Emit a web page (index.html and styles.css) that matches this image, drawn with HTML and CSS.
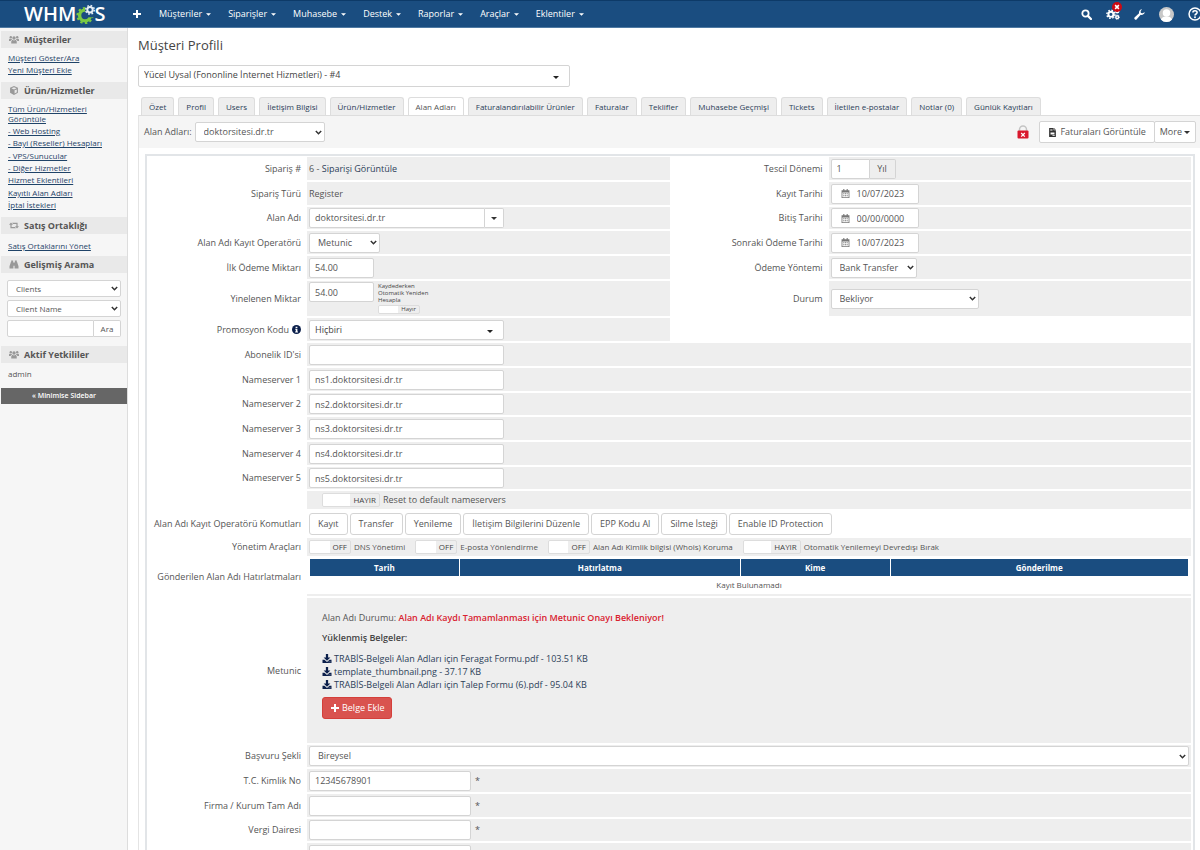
FILE: index.html
```html
<!DOCTYPE html>
<html lang="tr">
<head>
<meta charset="utf-8">
<title>WHMCS - Müşteri Profili</title>
<link rel="stylesheet" href="styles.css">
</head>
<body>
<svg class="defs" aria-hidden="true">
  <symbol id="caret" viewBox="0 0 8 4"><path d="M0 0h8L4 4z"/></symbol>
  <symbol id="plus" viewBox="0 0 10 10"><path d="M4 1h2v3h3v2H6v3H4V6H1V4h3z"/></symbol>
  <symbol id="users" viewBox="0 0 20 16"><circle cx="10" cy="5" r="3.4"/><circle cx="3.6" cy="3.6" r="2.4"/><circle cx="16.4" cy="3.6" r="2.4"/><path d="M4.500 16v-3.500c0-2.500 1.500-3.500 3-3.500 1.500 1 3.500 1 5 0 1.500 0 3 1 3 3.500V16zM0 11V8.500C0 7 1 6.500 2 6.500c1 .7 2.500.7 3.500 0L6.500 8C4.500 8.500 3.600 9.500 3.400 11zM20 11V8.500c0-1.500-1-2-2-2-1 .7-2.500.7-3.500 0L13.500 8c2 .5 2.900 1.500 3.100 3z"/></symbol>
  <symbol id="cube" viewBox="0 0 16 16"><path fill-rule="evenodd" d="M8 0l7 3v9l-7 4-7-4V3zM8 2L3.500 4 8 6l4.500-2zM9 13.500l4-2.300V6L9 7.700z"/></symbol>
  <symbol id="retweet" viewBox="0 0 20 14"><path d="M4 1l4 4.500H5.200V10H12l2 2.500H2.800v-7H0zM16 13l-4-4.500h2.800V4H8L6 1.500h11.200v7H20z"/></symbol>
  <symbol id="binoculars" viewBox="0 0 16 16"><path d="M3 1h3.500v2.500H7V15H0v-4L2.500 3.500H3zM9.500 1H13v2.500h.5L16 11v4H9V3.500h.5zM7 5h2v5H7z"/></symbol>
  <symbol id="calendar" viewBox="0 0 16 16"><path fill-rule="evenodd" d="M4 0h2v2h4V0h2v2h3v14H1V2h3zM2.500 6v8.500h11V6zM4 7.500h2v2H4zm3 0h2v2H7zm3 0h2v2h-2zM4 11h2v2H4zm3 0h2v2H7zm3 0h2v2h-2z"/></symbol>
  <symbol id="download" viewBox="0 0 16 16"><path fill-rule="evenodd" d="M6 0h4v6h4l-6 6-6-6h4zM0 10h3.500L8 14l4.500-4H16v6H0zm11 3.500v1h1v-1zm2 0v1h1v-1z"/></symbol>
  <symbol id="invoice" viewBox="0 0 12 16"><path fill-rule="evenodd" d="M0 0h8v4h4v12H0zM9 0l3 3H9zM2 2v1h4V2zm0 2.500v1h4v-1zM2.500 8v3.500h7V8zM6 13v1h4v-1z"/></symbol>
</svg>

<header class="navbar">
  <a class="logo" href="#" aria-label="WHMCS">
    <span>WHM</span>
    <svg class="gear" viewBox="0 0 20 20" aria-hidden="true">
      <circle cx="9" cy="11.500" r="5.400" fill="none" stroke="#7ac943" stroke-width="3.400"/>
      <circle cx="9" cy="11.500" r="7.600" fill="none" stroke="#7ac943" stroke-width="2" stroke-dasharray="2.400 2.375"/>
      <path d="M12 9.500h8v3.800h-8z" fill="#1a4d80"/>
      <circle cx="14" cy="5.800" r="5" fill="#1a4d80"/>
      <circle cx="14" cy="5.800" r="2.700" fill="none" stroke="#e6eef5" stroke-width="2"/>
      <circle cx="14" cy="5.800" r="4.300" fill="none" stroke="#e6eef5" stroke-width="1.500" stroke-dasharray="1.700 1.677"/>
    </svg>
    <span>S</span>
  </a>
  <nav class="menu">
    <a class="add" href="#" aria-label="Ekle"><svg><use href="#plus"/></svg></a>
    <a href="#">Müşteriler<svg class="caret"><use href="#caret"/></svg></a>
    <a href="#">Siparişler<svg class="caret"><use href="#caret"/></svg></a>
    <a href="#">Muhasebe<svg class="caret"><use href="#caret"/></svg></a>
    <a href="#">Destek<svg class="caret"><use href="#caret"/></svg></a>
    <a href="#">Raporlar<svg class="caret"><use href="#caret"/></svg></a>
    <a href="#">Araçlar<svg class="caret"><use href="#caret"/></svg></a>
    <a href="#">Eklentiler<svg class="caret"><use href="#caret"/></svg></a>
  </nav>
  <div class="tools">
    <a href="#" aria-label="Ara"><svg viewBox="0 0 16 16"><circle cx="6.500" cy="6.500" r="4.600" fill="none" stroke="#fff" stroke-width="2.600"/><path d="M10 10l4.500 4.500" stroke="#fff" stroke-width="3.200" stroke-linecap="round"/></svg></a>
    <a class="gears" href="#" aria-label="Otomasyon"><svg viewBox="0 0 20 16"><circle cx="7" cy="8.500" r="3.600" fill="none" stroke="#fff" stroke-width="2.800"/><circle cx="7" cy="8.500" r="5.700" fill="none" stroke="#fff" stroke-width="2.200" stroke-dasharray="2.300 2.180"/><circle cx="16" cy="12.500" r="2" fill="none" stroke="#fff" stroke-width="2"/><circle cx="16" cy="12.500" r="3.200" fill="none" stroke="#fff" stroke-width="1.200" stroke-dasharray="1.300 1.200"/><circle cx="16" cy="4" r="2.200" fill="none" stroke="#fff" stroke-width="2"/></svg><span class="badge"><svg viewBox="0 0 8 8"><path d="M1.500 1.500l5 5M6.500 1.500l-5 5" stroke="#fff" stroke-width="2"/></svg></span></a>
    <a href="#" aria-label="Ayarlar"><svg viewBox="0 0 16 16"><path fill="#fff" d="M15.500 4.200A4.600 4.600 0 0 1 9.700 8.500L4 14.800a2 2 0 0 1-2.900-2.900L7.400 6.200A4.600 4.600 0 0 1 11.800.5L9.600 3l.4 2.700 2.800.5z"/></svg></a>
    <a class="avatar" href="#" aria-label="Hesap"><svg viewBox="0 0 16 16"><circle cx="8" cy="8" r="8" fill="#c8c8c8"/><circle cx="8" cy="6.500" r="4" fill="#fff"/><path d="M2 13.200c1.200-2.500 3.500-3.200 6-3.200s4.800.7 6 3.200A8 8 0 0 1 2 13.200z" fill="#fff"/></svg></a>
    <a href="#" aria-label="Yardım"><svg class="help" viewBox="0 0 16 16"><circle cx="8" cy="8" r="6.800" fill="none" stroke="#fff" stroke-width="1.700"/><path d="M5.600 6.200C5.700 3.500 10.400 3.600 10.400 6.300 10.400 8 8 8 8 9.700" fill="none" stroke="#fff" stroke-width="1.800"/><circle cx="8" cy="11.800" r="1.100" fill="#fff"/></svg></a>
  </div>
</header>

<div class="layout">
  <aside class="sidebar">
    <h2><svg><use href="#users"/></svg>Müşteriler</h2>
    <ul>
      <li><a href="#">Müşteri Göster/Ara</a></li>
      <li><a href="#">Yeni Müşteri Ekle</a></li>
    </ul>
    <h2><svg><use href="#cube"/></svg>Ürün/Hizmetler</h2>
    <ul>
      <li><a href="#">Tüm Ürün/Hizmetleri Görüntüle</a></li>
      <li><a href="#">- Web Hosting</a></li>
      <li><a href="#">- Bayi (Reseller) Hesapları</a></li>
      <li><a href="#">- VPS/Sunucular</a></li>
      <li><a href="#">- Diğer Hizmetler</a></li>
      <li><a href="#">Hizmet Eklentileri</a></li>
      <li><a href="#">Kayıtlı Alan Adları</a></li>
      <li><a href="#">İptal İstekleri</a></li>
    </ul>
    <h2><svg><use href="#retweet"/></svg>Satış Ortaklığı</h2>
    <ul class="single">
      <li><a href="#">Satış Ortaklarını Yönet</a></li>
    </ul>
    <h2><svg><use href="#binoculars"/></svg>Gelişmiş Arama</h2>
    <form class="search">
      <select aria-label="Arama türü"><option>Clients</option></select>
      <select aria-label="Arama alanı"><option>Client Name</option></select>
      <div class="group"><input type="text" aria-label="Aranan"><button type="button">Ara</button></div>
    </form>
    <h2><svg><use href="#users"/></svg>Aktif Yetkililer</h2>
    <p class="staff">admin</p>
    <button class="minimise" type="button">« Minimise Sidebar</button>
  </aside>

  <main class="content">
    <h1>Müşteri Profili</h1>
    <div class="picker client"><select aria-label="Müşteri"><option>Yücel Uysal (Fononline İnternet Hizmetleri) - #4</option></select><svg class="caret"><use href="#caret"/></svg></div>

    <nav class="tabs">
      <a href="#">Özet</a><a href="#">Profil</a><a href="#">Users</a><a href="#">İletişim Bilgisi</a><a href="#">Ürün/Hizmetler</a><a class="active" href="#">Alan Adları</a><a href="#">Faturalandırılabilir Ürünler</a><a href="#">Faturalar</a><a href="#">Teklifler</a><a href="#">Muhasebe Geçmişi</a><a href="#">Tickets</a><a href="#">İletilen e-postalar</a><a href="#">Notlar (0)</a><a href="#">Günlük Kayıtları</a>
    </nav>

    <div class="pane">
      <div class="toolbar">
        <label for="domains">Alan Adları:</label>
        <select id="domains" class="w130"><option>doktorsitesi.dr.tr</option></select>
        <svg class="lock" viewBox="0 0 12 14" role="img" aria-label="Kilit"><path d="M2.500 6V4.500a3.500 3.500 0 0 1 7 0V6" fill="none" stroke="#c4c4c4" stroke-width="1.500"/><rect x=".5" y="5.500" width="11" height="8" rx="1" fill="#d9182d"/><path d="M4.200 8l3.600 3.600M7.800 8l-3.600 3.600" stroke="#fff" stroke-width="1.300"/></svg>
        <div class="actions"><button type="button"><svg class="inv"><use href="#invoice"/></svg>Faturaları Görüntüle</button><button type="button" class="more">More<svg class="caret"><use href="#caret"/></svg></button></div>
      </div>

      <form class="panel">
        <div class="columns">
          <div class="col">
            <div class="row"><span class="label">Sipariş #</span><div class="field"><span>6 - <a href="#">Siparişi Görüntüle</a></span></div></div>
            <div class="row"><span class="label">Sipariş Türü</span><div class="field">Register</div></div>
            <div class="row"><label class="label" for="dom">Alan Adı</label><div class="field"><div class="group w195"><input id="dom" type="text" value="doktorsitesi.dr.tr"><button type="button" class="drop" aria-label="Seçenekler"><svg class="caret"><use href="#caret"/></svg></button></div></div></div>
            <div class="row"><label class="label" for="reg">Alan Adı Kayıt Operatörü</label><div class="field"><select id="reg" class="w71"><option>Metunic</option></select></div></div>
            <div class="row"><label class="label" for="first">İlk Ödeme Miktarı</label><div class="field"><input id="first" class="w65" type="text" value="54.00"></div></div>
            <div class="row tall"><label class="label" for="rec">Yinelenen Miktar</label><div class="field"><input id="rec" class="w65" type="text" value="54.00"><label class="recalc">Kaydederken<br>Otomatik Yeniden<br>Hesapla<span class="switch tiny"><input type="checkbox"><span>Hayır</span></span></label></div></div>
            <div class="row"><label class="label" for="promo">Promosyon Kodu <svg class="info" viewBox="0 0 10 10"><circle cx="5" cy="5" r="5" fill="#0b1f4b"/><path d="M4 2h2v1.400H4zM3.600 4.200H6v3h.6v1H3.500v-1h.7v-2h-.6z" fill="#fff"/></svg></label><div class="field"><div class="picker w195"><select id="promo"><option>Hiçbiri</option></select><svg class="caret"><use href="#caret"/></svg></div></div></div>
          </div>
          <div class="col">
            <div class="row"><label class="label" for="period">Tescil Dönemi</label><div class="field"><div class="group w65"><input id="period" type="text" value="1"><span class="addon">Yıl</span></div></div></div>
            <div class="row"><label class="label" for="d1">Kayıt Tarihi</label><div class="field"><div class="date"><svg><use href="#calendar"/></svg><input id="d1" type="text" value="10/07/2023"></div></div></div>
            <div class="row"><label class="label" for="d2">Bitiş Tarihi</label><div class="field"><div class="date"><svg><use href="#calendar"/></svg><input id="d2" type="text" value="00/00/0000"></div></div></div>
            <div class="row"><label class="label" for="d3">Sonraki Ödeme Tarihi</label><div class="field"><div class="date"><svg><use href="#calendar"/></svg><input id="d3" type="text" value="10/07/2023"></div></div></div>
            <div class="row"><label class="label" for="pay">Ödeme Yöntemi</label><div class="field"><select id="pay" class="w86"><option>Bank Transfer</option></select></div></div>
            <div class="row tall"><label class="label" for="status">Durum</label><div class="field"><select id="status" class="w148"><option>Bekliyor</option></select></div></div>
          </div>
        </div>

        <div class="rows">
          <div class="row"><label class="label" for="sub">Abonelik ID'si</label><div class="field"><input id="sub" class="w195" type="text"></div></div>
          <div class="row"><label class="label" for="ns1">Nameserver 1</label><div class="field"><input id="ns1" class="w195" type="text" value="ns1.doktorsitesi.dr.tr"></div></div>
          <div class="row"><label class="label" for="ns2">Nameserver 2</label><div class="field"><input id="ns2" class="w195" type="text" value="ns2.doktorsitesi.dr.tr"></div></div>
          <div class="row"><label class="label" for="ns3">Nameserver 3</label><div class="field"><input id="ns3" class="w195" type="text" value="ns3.doktorsitesi.dr.tr"></div></div>
          <div class="row"><label class="label" for="ns4">Nameserver 4</label><div class="field"><input id="ns4" class="w195" type="text" value="ns4.doktorsitesi.dr.tr"></div></div>
          <div class="row"><label class="label" for="ns5">Nameserver 5</label><div class="field"><input id="ns5" class="w195" type="text" value="ns5.doktorsitesi.dr.tr"></div></div>
          <div class="row short indent"><span class="label"></span><div class="field"><label class="toggle"><span class="switch wide"><input type="checkbox"><span>HAYIR</span></span>Reset to default nameservers</label></div></div>
          <div class="row commands"><span class="label">Alan Adı Kayıt Operatörü Komutları</span><div class="field"><button type="button">Kayıt</button><button type="button">Transfer</button><button type="button">Yenileme</button><button type="button">İletişim Bilgilerini Düzenle</button><button type="button">EPP Kodu Al</button><button type="button">Silme İsteği</button><button type="button">Enable ID Protection</button></div></div>
          <div class="row short management"><span class="label">Yönetim Araçları</span><div class="field">
            <label class="toggle"><span class="switch"><input type="checkbox"><span>OFF</span></span>DNS Yönetimi</label>
            <label class="toggle"><span class="switch"><input type="checkbox"><span>OFF</span></span>E-posta Yönlendirme</label>
            <label class="toggle"><span class="switch"><input type="checkbox"><span>OFF</span></span>Alan Adı Kimlik bilgisi (Whois) Koruma</label>
            <label class="toggle"><span class="switch wide"><input type="checkbox"><span>HAYIR</span></span>Otomatik Yenilemeyi Devredışı Bırak</label>
          </div></div>
          <div class="row reminders"><span class="label">Gönderilen Alan Adı Hatırlatmaları</span><div class="field">
            <table>
              <thead><tr><th class="c1">Tarih</th><th class="c2">Hatırlatma</th><th class="c3">Kime</th><th>Gönderilme</th></tr></thead>
              <tbody><tr><td colspan="4">Kayıt Bulunamadı</td></tr></tbody>
            </table>
          </div></div>
          <div class="row module"><span class="label">Metunic</span><div class="field">
            <p>Alan Adı Durumu: <strong class="alert">Alan Adı Kaydı Tamamlanması için Metunic Onayı Bekleniyor!</strong></p>
            <p><strong>Yüklenmiş Belgeler:</strong></p>
            <ul>
              <li><a href="#"><svg><use href="#download"/></svg>TRABİS-Belgeli Alan Adları için Feragat Formu.pdf - 103.51 KB</a></li>
              <li><a href="#"><svg><use href="#download"/></svg>template_thumbnail.png - 37.17 KB</a></li>
              <li><a href="#"><svg><use href="#download"/></svg>TRABİS-Belgeli Alan Adları için Talep Formu (6).pdf - 95.04 KB</a></li>
            </ul>
            <button class="danger" type="button"><svg><use href="#plus"/></svg>Belge Ekle</button>
          </div></div>
          <div class="row"><label class="label" for="kind">Başvuru Şekli</label><div class="field"><select id="kind" class="full"><option>Bireysel</option></select></div></div>
          <div class="row"><label class="label" for="tc">T.C. Kimlik No</label><div class="field"><input id="tc" class="w162" type="text" value="12345678901"><span class="req">*</span></div></div>
          <div class="row"><label class="label" for="firm">Firma / Kurum Tam Adı</label><div class="field"><input id="firm" class="w162" type="text"><span class="req">*</span></div></div>
          <div class="row"><label class="label" for="tax">Vergi Dairesi</label><div class="field"><input id="tax" class="w162" type="text"><span class="req">*</span></div></div>
          <div class="row"><span class="label"></span><div class="field"><input class="w162" type="text" aria-label="Vergi numarası"></div></div>
        </div>
      </form>
    </div>
  </main>
</div>
</body>
</html>
```
FILE: styles.css
```css
* { box-sizing: border-box; }

html { overflow: hidden; height: 100%; }

body {
  margin: 0;
  height: 100%;
  display: flex;
  flex-direction: column;
  overflow: hidden;
  background: #fff;
  color: #555;
  font: 9px/12px "Open Sans", "Noto Sans", sans-serif;
}

.defs { display: none; }
svg { fill: currentColor; flex: none; }
a { color: inherit; text-decoration: none; }
ul { list-style: none; margin: 0; padding: 0; }
input, select, button { font: inherit; color: inherit; margin: 0; }
button { cursor: pointer; }
.caret { width: 6px; height: 3px; }

/* Top bar */
.navbar {
  flex: none;
  display: flex;
  align-items: center;
  height: 28px;
  padding-left: 24px;
  background: #1a4d80;
  border-top: 1px solid #0d3a68;
  border-bottom: 1px solid #4f7aa3;
  color: #fff;
}
.logo {
  display: flex;
  align-items: center;
  width: 108px;
  font-size: 20px;
  line-height: 26px;
  font-weight: 600;
}
.gear { width: 20px; height: 20px; margin-right: -2px; }
.menu { display: flex; align-items: center; gap: 17px; font-weight: 500; }
.menu a { display: flex; align-items: center; gap: 4px; }
.menu .add svg { width: 10px; height: 10px; }
.menu .caret { width: 5px; }
.tools { display: flex; align-items: center; gap: 14px; margin-left: auto; margin-right: -2px; }
.tools a { position: relative; display: flex; }
.tools svg { width: 11px; height: 11px; }
.tools .gears > svg { width: 14px; height: 12px; }
.tools .avatar svg { width: 15px; height: 15px; }
.tools .help { width: 14px; height: 14px; }
.badge {
  position: absolute;
  top: -6px;
  right: -2px;
  display: flex;
  align-items: center;
  justify-content: center;
  width: 10px;
  height: 10px;
  border-radius: 50%;
  background: #cc0a14;
}
.tools .badge svg { width: 6px; height: 6px; }

/* Sidebar */
.layout { flex: 1; display: flex; min-height: 0; }
.sidebar {
  flex: none;
  width: 128px;
  padding: 3px 0 0 1px;
  background: #f6f6f6;
  border-right: 1px solid #ddd;
  font-size: 8px;
}
.sidebar h2 {
  display: flex;
  align-items: center;
  gap: 5px;
  height: 17px;
  margin: 0;
  padding-left: 8px;
  background: #e9e9e9;
  color: #555;
  font-size: 9px;
  font-weight: 700;
}
.sidebar h2 svg { width: 10px; height: 9px; color: #999; }
.sidebar ul { padding: 4px 7px 6px; color: #1f4368; }
.sidebar .single { padding: 6px 7px 4px; }
.sidebar li { line-height: 10px; padding: 1px 0; }
.sidebar li:nth-child(3n) { padding-bottom: 2px; }
.sidebar li a { text-decoration: underline; }
.search { display: flex; flex-direction: column; gap: 3px; padding: 7px 6px 9px; }
.search select, .search .group { height: 17px; }
.search .group button { width: 27px; }
.staff { margin: 0; padding: 5px 7px 8px; }
.minimise {
  display: block;
  width: 100%;
  height: 16px;
  padding: 0;
  border: 0;
  background: #666;
  color: #fff;
  font-weight: 600;
  font-size: 7px;
}

/* Form controls */
select, input[type="text"] {
  height: 20px;
  padding: 0 5px;
  border: 1px solid #d4d4d4;
  border-radius: 2px;
  background: #fff;
}
select {
  appearance: none;
  padding: 0 12px 0 8px;
  background: #fff url("data:image/svg+xml,%3Csvg xmlns='http://www.w3.org/2000/svg' viewBox='0 0 7 5'%3E%3Cpath d='M.8 1l2.700 2.700L6.200 1' fill='none' stroke='%23333' stroke-width='1.500'/%3E%3C/svg%3E") no-repeat right 2px center / 7px 5px;
}
.group { display: flex; height: 20px; }
.group input { flex: 1; min-width: 0; height: auto; border-radius: 2px 0 0 2px; }
.group button, .addon {
  display: flex;
  align-items: center;
  justify-content: center;
  padding: 0;
  border: 1px solid #d4d4d4;
  border-left: 0;
  border-radius: 0 2px 2px 0;
  background: #fff;
}
.group .drop { width: 19px; color: #333; }
.group .addon { width: 26px; background: #eee; }
.picker { position: relative; display: flex; color: #444; }
.picker select { width: 100%; padding: 0 5px; background: #fff; }
.picker .caret { position: absolute; right: 11px; top: 50%; color: #222; pointer-events: none; }
.client { width: 432px; }
.client select { height: 22px; padding-bottom: 3px; }
.w65 { width: 65px; }
.w71 { width: 71px; }
.w86 { width: 86px; }
.w130 { width: 130px; }
.w148 { width: 148px; }
.w162 { width: 162px; }
.w195 { width: 195px; }
.full { width: 100%; }

/* Page */
.content { flex: 1; min-width: 0; padding: 8px 0 0 10px; }
h1 { margin: 0 0 11px; font-size: 13px; line-height: 18px; font-weight: 400; color: #444; }
.tabs { display: flex; gap: 4px; padding: 10px 3px 0; font-size: 8px; color: #2c4058; }
.tabs a {
  flex: none;
  height: 18px;
  padding: 0 7px;
  line-height: 17px;
  border: 1px solid #ddd;
  border-bottom: 0;
  border-radius: 3px 3px 0 0;
  background: #eee;
}
.tabs .active { background: #fff; color: #555; }
.pane { border-left: 1px solid #e4e4e4; }
.toolbar {
  display: flex;
  align-items: center;
  gap: 3px;
  height: 33px;
  padding: 0 4px 0 5px;
  background: #f5f5f5;
  border-top: 1px solid #ddd;
}
.lock { width: 12px; height: 14px; margin-left: auto; margin-right: 7px; }
.actions { display: flex; }
.actions button {
  display: flex;
  align-items: center;
  gap: 4px;
  height: 22px;
  padding: 0 8px 0 9px;
  border: 1px solid #d4d4d4;
  border-radius: 2px;
  background: #fff;
}
.actions .more { gap: 2px; padding: 0 5px; margin-left: -1px; }
.actions .caret, .inv { color: #333; }
.inv { width: 7px; height: 9px; }

.panel {
  margin: 6px 5px 0 6px;
  padding: 1px 2px 2px 3px;
  border: 2px solid #e2e5e8;
}
.columns { display: grid; grid-template-columns: 1fr 1fr; gap: 2px; margin-bottom: 2px; }
.col, .rows { display: grid; gap: 2px; align-content: start; }
.row { display: grid; grid-template-columns: 156px minmax(0, 1fr); gap: 1px; min-height: 23px; }
.row:nth-child(3n) { min-height: 22px; }
.row.tall { min-height: 35px; }
.row.short { min-height: 18px; }
.label { display: flex; align-items: center; justify-content: flex-end; gap: 3px; padding-right: 5px; text-align: right; }
.field { display: flex; align-items: center; padding: 0 2px; background: #eee; }
.field a { color: #2c4058; }
.info { width: 9px; height: 9px; }
.tall .recalc { display: flex; flex-direction: column; padding-left: 4px; font-size: 6px; line-height: 7px; color: #444; }
.tall input[type="text"] { align-self: flex-start; margin-top: 1px; }
.date {
  display: flex;
  align-items: center;
  width: 88px;
  height: 20px;
  padding-left: 9px;
  border: 1px solid #d4d4d4;
  border-radius: 2px;
  background: #fff;
}
.date svg { width: 9px; height: 9px; color: #777; }
.date input[type="text"] { flex: 1; min-width: 0; height: 18px; padding: 0 7px; border: 0; }

.switch {
  display: flex;
  width: 42px;
  height: 14px;
  border: 1px solid #ddd;
  border-radius: 2px;
  background: #eee;
  overflow: hidden;
  color: #444;
  font-size: 8px;
  line-height: 12px;
}
.switch input { appearance: none; flex: 1; min-width: 0; background: #fff; }
.switch span { padding: 0 3px; }
.switch.wide { width: 58px; }
.switch.tiny { width: 42px; height: 9px; font-size: 6px; line-height: 7px; margin-top: 1px; }
.toggle { display: flex; align-items: center; gap: 3px; }
.indent .field { padding-left: 15px; }
.management .field { gap: 10px; font-size: 8px; }

.commands .field { gap: 2px; background: #fff; }
.row.commands { min-height: 25px; }
.commands button {
  height: 22px;
  padding: 0 8px;
  border: 1px solid #d4d4d4;
  border-radius: 3px;
  background: #fff;
}
.row.reminders { min-height: 38px; }
.reminders .field { align-items: flex-start; border-bottom: 2px solid #eee; background: #fff; }
table { width: 100%; border-collapse: separate; border-spacing: 1px; table-layout: fixed; font-size: 8px; text-align: center; }
th { height: 17px; padding: 0; background: #1a4d80; color: #fff; font-weight: 700; }
td { height: 15px; padding: 0; }
.c1 { width: 17%; }
.c2 { width: 32%; }
.c3 { width: 17%; }

.row.module { min-height: 145px; }
.module .field { flex-direction: column; align-items: flex-start; padding: 14px 15px; }
.module p { margin: 0 0 8px; }
.module strong { font-weight: 600; color: #444; }
.module .alert { color: #d9222f; }
.module ul { color: #2c4058; }
.module li a { display: flex; align-items: center; gap: 2px; height: 13px; }
.module li svg { width: 10px; height: 9px; color: #0b1f4b; }
.danger {
  display: flex;
  align-items: center;
  gap: 2px;
  height: 22px;
  margin-top: 6px;
  padding: 0 7px;
  border: 1px solid #d43f3a;
  border-radius: 3px;
  background: #d9534f;
  color: #fff;
}
.danger svg { width: 10px; height: 10px; }
.req { padding-left: 4px; }
```
